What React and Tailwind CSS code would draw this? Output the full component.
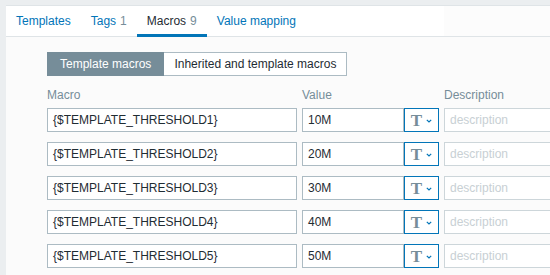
import React from "react";

const TABS = [
  { label: "Templates" },
  { label: "Tags", count: 1 },
  { label: "Macros", count: 9, active: true },
  { label: "Value mapping" },
];

const MACROS = [
  { name: "{$TEMPLATE_THRESHOLD1}", value: "10M" },
  { name: "{$TEMPLATE_THRESHOLD2}", value: "20M" },
  { name: "{$TEMPLATE_THRESHOLD3}", value: "30M" },
  { name: "{$TEMPLATE_THRESHOLD4}", value: "40M" },
  { name: "{$TEMPLATE_THRESHOLD5}", value: "50M" },
];

function TypeButton() {
  return (
    <div className="w-[35px] h-[24px] shrink-0 border border-[#0275b8] bg-white flex items-center justify-center gap-[4px]">
      <span className="font-['Liberation_Serif',serif] font-bold text-[17px] leading-none text-[#768d99]">T</span>
      <svg width="6" height="4" viewBox="0 0 6 4" className="mt-[1px]">
        <path d="M0.8 0.8 L3 3 L5.2 0.8" fill="none" stroke="#0275b8" strokeWidth="1.2" />
      </svg>
    </div>
  );
}

function MacroRow({ macro }) {
  return (
    <div className="flex h-[24px]">
      <div className="w-[250px] h-full shrink-0 border border-[#acbbc3] bg-white px-[5px] flex items-center text-[#1f2c33]">
        {macro.name}
      </div>
      <div className="w-[102px] h-full shrink-0 ml-[5px] border border-[#acbbc3] bg-white px-[5px] flex items-center text-[#1f2c33]">
        {macro.value}
      </div>
      <TypeButton />
      <div className="w-[120px] h-full shrink-0 ml-[5px] border border-[#cdd6da] bg-white px-[5px] flex items-center text-[#c8d0d4]">
        description
      </div>
    </div>
  );
}

export default function App() {
  return (
    <div className="w-[550px] h-[275px] overflow-hidden bg-[#ebeef0] pl-[6px] pt-[5px] font-['Liberation_Sans',Arial,sans-serif] text-[12px]">
      <div className="h-full border-t border-[#dfe4e7] bg-[#fbfbfb]">
        <div className="flex h-[31px] border-b border-[#dfe4e7]">
          <div className="flex w-[438px] bg-white">
            {TABS.map((tab) => (
              <div
                key={tab.label}
                className={`px-[10px] flex items-center ${
                  tab.active ? "border-b-[3px] border-[#0275b8] mb-[-1px] pt-[2px] text-[#1f2c33]" : "text-[#0275b8]"
                }`}
              >
                {tab.label}
                {tab.count && <span className="ml-[4px] text-[#768d99]">{tab.count}</span>}
              </div>
            ))}
          </div>
          <div className="flex-1 bg-[#fcfcfc]"></div>
        </div>

        <div className="pl-[41px] pt-[15px]">
          <div className="flex h-[24px]">
            <div className="px-[12px] flex items-center bg-[#768d99] text-white border border-[#768d99]">
              Template macros
            </div>
            <div className="px-[10px] flex items-center bg-white text-[#1f2c33] border border-[#acbbc3] border-l-0">
              Inherited and template macros
            </div>
          </div>

          <div className="flex mt-[10px] h-[18px] leading-[18px] text-[#768d99]">
            <div className="w-[255px]">Macro</div>
            <div className="w-[142px]">Value</div>
            <div>Description</div>
          </div>

          <div className="mt-[4px] flex flex-col gap-[10px]">
            {MACROS.map((macro) => (
              <MacroRow key={macro.name} macro={macro} />
            ))}
          </div>
        </div>
      </div>
    </div>
  );
}
